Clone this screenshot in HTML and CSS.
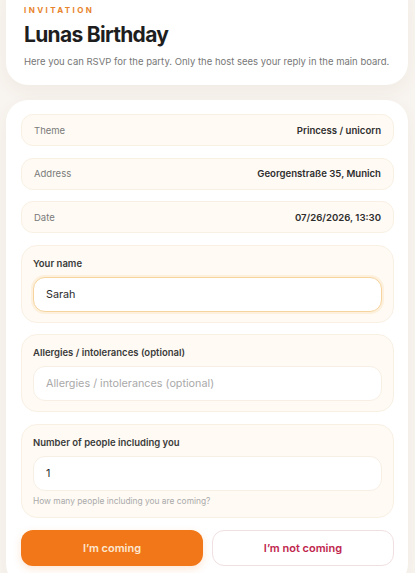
FILE: index.html
```html
<!DOCTYPE html>
<html lang="en">
<head>
<meta charset="utf-8">
<link rel="stylesheet" href="styles.css">
</head>
<body>
<header class="card intro">
  <div class="eyebrow">INVITATION</div>
  <h1 class="title">Lunas Birthday</h1>
  <p class="desc">Here you can RSVP for the party. Only the host sees your reply in the main board.</p>
</header>
<main class="card form">
  <div class="row"><span class="row-label">Theme</span><span class="row-value">Princess / unicorn</span></div>
  <div class="row"><span class="row-label">Address</span><span class="row-value">Georgenstraße 35, Munich</span></div>
  <div class="row"><span class="row-label">Date</span><span class="row-value">07/26/2026, 13:30</span></div>
  <div class="group">
    <label class="group-label">Your name</label>
    <div class="input focus">Sarah</div>
  </div>
  <div class="group">
    <label class="group-label">Allergies / intolerances (optional)</label>
    <div class="input placeholder">Allergies / intolerances (optional)</div>
  </div>
  <div class="group last">
    <label class="group-label">Number of people including you</label>
    <div class="input">1</div>
    <div class="hint">How many people including you are coming?</div>
  </div>
  <div class="actions">
    <button class="btn primary">I’m coming</button>
    <button class="btn secondary">I’m not coming</button>
  </div>
</main>
</body>
</html>
```
FILE: styles.css
```css
* { box-sizing: border-box; }
html, body { margin: 0; padding: 0; }
body {
  background: #f8f4ef;
  font-family: Inter, "Noto Sans", sans-serif;
  color: #2a2a2a;
  padding: 0 7px 0 6px;
  overflow: hidden;
  height: 573px;
}
.card {
  background: #fff;
  border-radius: 22px;
  box-shadow: 0 6px 18px rgba(120, 90, 50, 0.06);
}
.intro {
  margin-top: -22px;
  padding: 27px 18px 17px 18px;
}
.eyebrow {
  font-size: 8px;
  font-weight: 700;
  letter-spacing: 2.4px;
  color: #e8842c;
  line-height: 11px;
}
.title {
  margin: 5px 0 0 0;
  font-size: 21px;
  line-height: 28px;
  font-weight: 700;
  letter-spacing: -0.7px;
  color: #1e1e1e;
}
.desc {
  margin: 6px 0 0 0;
  font-size: 9.5px;
  line-height: 13px;
  color: #777;
}
.form {
  margin-top: 15px;
  padding: 14px 14px 20px 15px;
  display: flex;
  flex-direction: column;
  gap: 11.5px;
}
.row {
  height: 32px;
  display: flex;
  align-items: center;
  justify-content: space-between;
  padding: 0 12px;
  background: #fffaf4;
  border: 1px solid #f9f0e4;
  border-radius: 12px;
  font-size: 9.5px;
}
.row-label { color: #7a7a7a; }
.row-value { font-weight: 600; color: #2e2e2e; font-size: 9.6px; }
.group {
  background: #fffaf4;
  border: 1px solid #f9f0e4;
  border-radius: 16px;
  padding: 12px 11px 10px 11px;
  display: flex;
  flex-direction: column;
}
.group-label {
  font-size: 9.5px;
  font-weight: 600;
  color: #3a3a3a;
  line-height: 12px;
  margin-bottom: 7px;
}
.input {
  height: 35px;
  background: #fff;
  border: 1px solid #f8efe4;
  border-radius: 12px;
  display: flex;
  align-items: center;
  padding: 0 12px;
  font-size: 10.8px;
  color: #2a2a2a;
}
.input.focus {
  border: 1.5px solid #f6d49e;
  box-shadow: 0 0 0 2px #fdf0dc;
}
.input.placeholder { color: #a9a9a9; }
.hint {
  margin-top: 5.5px;
  font-size: 8.4px;
  color: #aaa;
  line-height: 11px;
}
.actions {
  display: grid;
  grid-template-columns: 1fr 1fr;
  gap: 9px;
}
.btn {
  height: 36px;
  border-radius: 12px;
  font-family: Inter, "Noto Sans", sans-serif;
  font-size: 11px;
  font-weight: 600;
}
.primary {
  background: #f17718;
  color: #fde6cf;
  border: none;
  box-shadow: 0 3px 8px rgba(241, 119, 24, 0.18);
}
.secondary {
  background: #fff;
  color: #c0254d;
  border: 1.5px solid #f1e0e2;
}
```
